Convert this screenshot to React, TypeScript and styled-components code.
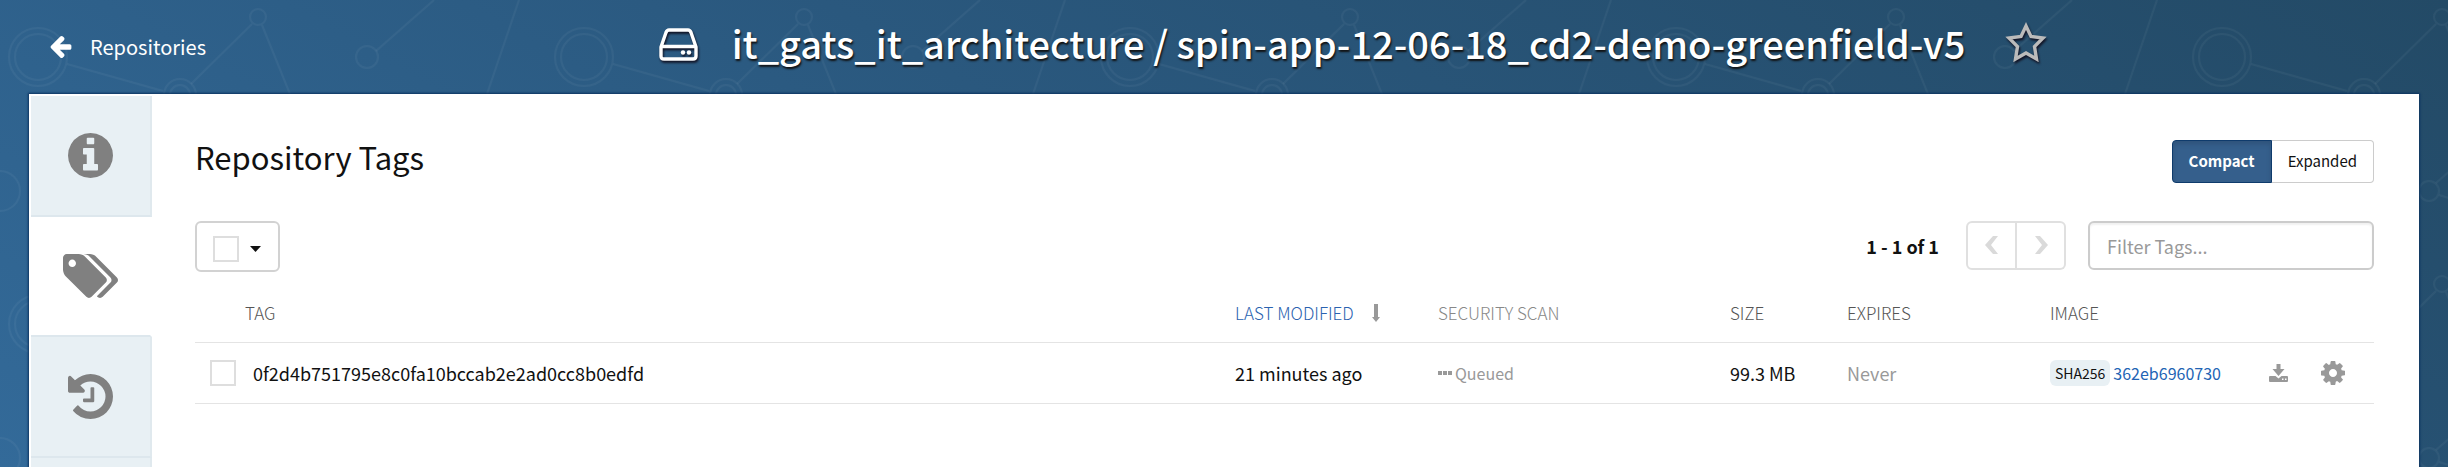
import React, { useId } from "react";
import styled, { createGlobalStyle, css } from "styled-components";

const tile = `<svg xmlns="http://www.w3.org/2000/svg" width="546" height="267" viewBox="0 0 546 267" fill="none" stroke="#fff" stroke-opacity=".045" stroke-width="2"><circle cx="38" cy="57" r="29"/><circle cx="38" cy="57" r="23"/><path d="M67 64 163 91"/><circle cx="180" cy="95" r="16"/><circle cx="180" cy="95" r="10"/><path d="M191 84 252 24"/><circle cx="258" cy="17" r="8"/><path d="M262 25 290 94 318 170"/><circle cx="367" cy="57" r="11"/><path d="M376 51 434 0"/><path d="M519 0 487 94"/><circle cx="0" cy="191" r="20"/><circle cx="546" cy="191" r="20"/><circle cx="245" cy="191" r="10"/><path d="M252 183 290 150M255 195 320 215"/></svg>`;

const GlobalStyle = createGlobalStyle`
  * { box-sizing: border-box; }
  body {
    margin: 0;
    font-family: "Noto Sans CJK SC", "Noto Sans", sans-serif;
    color: #111;
    background-color: #2b5a80;
    background-image: url("data:image/svg+xml,${encodeURIComponent(tile)}"),
      linear-gradient(30deg, #336a99 0%, #2a587e 50%, #234a66 100%);
    background-attachment: fixed;
  }
  button, input { font: inherit; color: inherit; margin: 0; }
`;

const Page = styled.div`
  min-height: 100vh;
  display: flex;
  flex-direction: column;
`;

const Header = styled.header`
  display: flex;
  align-items: center;
  height: 94px;
  padding-left: 50px;
  color: #fff;
`;

const BackLink = styled.a`
  display: flex;
  flex: none;
  align-items: center;
  gap: 18px;
  width: 208px;
  font-size: 20px;
  line-height: 28px;
  color: #fff;
  text-decoration: none;
`;

const RepoTitle = styled.h1`
  flex: 1;
  display: flex;
  align-items: center;
  justify-content: center;
  margin: 0;
  padding-bottom: 6px;
  gap: 34px;
  font-size: 38px;
  line-height: 52px;
  font-weight: 500;
  text-shadow: 1px 2px 2px #111;
  white-space: nowrap;
`;

const RepoName = styled.span`
  padding-bottom: 3px;
`;

const StarButton = styled.button`
  display: flex;
  padding: 0 0 4px;
  margin-left: 6px;
  border: 0;
  background: none;
`;

const Shadowed = styled.svg`
  display: block;
  filter: drop-shadow(1px 2px 1px #112);
`;

const Icon = styled.svg`
  display: block;
  flex: none;
`;

const Panel = styled.main`
  flex: 1;
  display: flex;
  margin: 0 29px;
  background: #fff;
  box-shadow: 0 0 2px 1px #0b3360;
`;

const SideTabs = styled.nav`
  width: 123px;
  flex: none;
  display: flex;
  flex-direction: column;
  padding: 2px 0 0 2px;
`;

const SideTab = styled.a<{ $active?: boolean; $rest?: boolean }>`
  display: flex;
  flex: none;
  align-items: center;
  justify-content: center;
  height: 121px;
  padding-bottom: 1px;
  color: #808080;
  background: #e8f0f4;
  border-right: 2px solid #e0e9ee;
  border-bottom: 2px solid #dde7ed;
  ${(p) =>
    p.$active &&
    css`
      height: 120px;
      background: #fff;
      border-right-color: #fff;
    `}
  ${(p) =>
    p.$rest &&
    css`
      flex: 1;
      height: auto;
      border-bottom: 0;
    `}
`;

const Content = styled.section`
  flex: 1;
  min-width: 0;
  padding: 46px 45px 0 43px;
`;

const Row = styled.div<{ $gap?: number }>`
  display: flex;
  align-items: center;
  gap: ${(p) => p.$gap ?? 0}px;
`;

const TitleRow = styled(Row)`
  justify-content: space-between;
  height: 43px;
`;

const Heading = styled.h2`
  margin: 0;
  padding-bottom: 9px;
  font-size: 31px;
  line-height: 40px;
  font-weight: 400;
`;

const ModeButton = styled.button<{ $active?: boolean }>`
  height: 43px;
  padding: 0 16px 2px;
  font-size: 15px;
  line-height: 24px;
  border: 1px solid #ccc;
  background: #fff;
  ${(p) =>
    p.$active
      ? css`
          color: #fff;
          font-weight: 700;
          background: #355f8c;
          border-color: #0f3b6c;
          border-radius: 4px 0 0 4px;
          box-shadow: inset 0 3px 5px rgba(0, 0, 0, 0.13);
        `
      : css`
          border-left: 0;
          border-radius: 0 4px 4px 0;
        `}
`;

const Toolbar = styled(Row)`
  justify-content: space-between;
  align-items: flex-start;
  margin-top: 38px;
  height: 51px;
`;

const CheckMenu = styled.div`
  display: flex;
  align-items: center;
  gap: 11px;
  width: 85px;
  height: 51px;
  padding: 4px 0 0 16px;
  border: 2px solid #d2d2d2;
  border-radius: 6px;
`;

const CheckBox = styled.input`
  appearance: none;
  flex: none;
  display: block;
  width: 26px;
  height: 26px;
  border: 2px solid #dedede;
  background: #fff;
`;

const CaretButton = styled.button`
  padding: 0;
  border: 0;
  background: none;
`;

const PageInfo = styled.span`
  padding-right: 27px;
  font-size: 18px;
  line-height: 26px;
  font-weight: 700;
`;

const PagerButton = styled.button<{ $side: "left" | "right" }>`
  display: flex;
  align-items: center;
  justify-content: center;
  width: ${(p) => (p.$side === "left" ? 51 : 49)}px;
  height: 49px;
  padding: 0;
  border: 2px solid #e0e0e0;
  background: #fff;
  color: #dadada;
  ${(p) =>
    p.$side === "left"
      ? css`border-radius: 6px 0 0 6px;`
      : css`
          border-left: 0;
          border-radius: 0 6px 6px 0;
        `}
`;

const FilterInput = styled.input`
  width: 286px;
  height: 49px;
  margin-left: 22px;
  padding: 0 17px;
  font-size: 18px;
  border: 2px solid #ccc;
  border-radius: 6px;
  box-shadow: inset 0 2px 2px rgba(0, 0, 0, 0.06);
  &::placeholder { color: #999; opacity: 1; }
`;

const Table = styled.table`
  width: 100%;
  table-layout: fixed;
  border-collapse: collapse;
  margin-top: 11px;
  font-size: 18px;
  line-height: 26px;
`;

const Col = styled.col<{ $w?: number }>`
  width: ${(p) => (p.$w ? `${p.$w}px` : "auto")};
`;

const Th = styled.th<{ $tone?: string }>`
  height: 59px;
  padding: 2px 0 0;
  text-align: left;
  font-size: 17px;
  font-weight: 300;
  color: ${(p) => p.$tone ?? "#555"};
  border-bottom: 1px solid #e4e4e4;
`;

const Td = styled.td<{ $muted?: boolean }>`
  height: 61px;
  padding: 0;
  white-space: nowrap;
  color: ${(p) => (p.$muted ? "#999" : "inherit")};
  border-bottom: 1px solid #e4e4e4;
`;

const TagHead = styled(Th)`
  padding-left: 50px;
`;

const TagCell = styled(Td)`
  padding-left: 15px;
`;

const Queued = styled(Row)`
  font-size: 16px;
`;

const Badge = styled.span`
  height: 26px;
  padding: 0 5px;
  border-radius: 6px;
  background: #e8f0f4;
  font-size: 14px;
  line-height: 26px;
`;

const ImageLink = styled.a`
  font-size: 16px;
  color: #2264b4;
  text-decoration: none;
`;

const IconButton = styled.button`
  display: flex;
  padding: 0;
  border: 0;
  background: none;
  color: #999;
`;

const paths = {
  info: "M1152 1376v-160q0-14-9-23t-23-9h-96V672q0-14-9-23t-23-9H672q-14 0-23 9t-9 23v160q0 14 9 23t23 9h96v320h-96q-14 0-23 9t-9 23v160q0 14 9 23t23 9h448q14 0 23-9t9-23zM1024 480V320q0-14-9-23t-23-9H800q-14 0-23 9t-9 23v160q0 14 9 23t23 9h192q14 0 23-9t9-23zm640 416q0 209-103 385.5T1281.5 1561 896 1664t-385.5-103T231 1281.5 128 896t103-385.5T510.5 231 896 128t385.5 103T1561 510.5 1664 896z",
  tags: "M576 448q0-53-37.5-90.5T448 320t-90.5 37.5T320 448t37.5 90.5T448 576t90.5-37.5T576 448zm1067 576q0 53-37 90l-491 492q-39 37-91 37-53 0-90-37L219 890q-38-37-64.5-101T128 672V256q0-52 38-90t90-38h416q53 0 117 26.5T891 219l715 714q37 39 37 91zm384 0q0 53-37 90l-491 492q-39 37-91 37-36 0-59-14t-53-45l470-470q37-37 37-90 0-52-37-91L1051 219q-38-38-102-64.5T832 128h224q53 0 117 26.5t102 64.5l715 714q37 39 37 91z",
  history: "M1664 896q0 156-61 298t-164 245-245 164-298 61q-172 0-327-72.5T305 1387q-7-10-6.5-22.5T307 1344l137-138q10-9 25-9 16 2 23 12 73 95 179 147t225 52q104 0 198.5-40.5T1258 1258t109.5-163.5T1408 896t-40.5-198.5T1258 534t-163.5-109.5T896 384q-98 0-188 35.5T548 521l137 138q31 30 14 69-17 40-59 40H192q-26 0-45-19t-19-45V256q0-42 40-59 39-17 69 14l130 129q107-101 244.5-156.5T896 128q156 0 298 61t245 164 164 245 61 298zm-640-288v448q0 14-9 23t-23 9H672q-14 0-23-9t-9-23v-64q0-14 9-23t23-9h224V608q0-14 9-23t23-9h64q14 0 23 9t9 23z",
  arrow: "M1664 896v128q0 53-32.5 90.5T1547 1152H843l293 294q38 36 38 90t-38 90l-75 76q-37 37-90 37-52 0-91-37L229 1050q-37-37-37-90 0-52 37-91l651-650q38-38 91-38 52 0 90 38l75 74q38 38 38 91t-38 91L843 768h704q52 0 84.5 37.5T1664 896z",
  cog: "M1152 896q0-106-75-181t-181-75-181 75-75 181 75 181 181 75 181-75 75-181zm512-109v222q0 12-8 23t-20 13l-185 28q-19 54-39 91 35 50 107 138 10 12 10 25t-9 23q-27 37-99 108t-94 71q-12 0-26-9l-138-108q-44 23-91 38-16 136-29 186-7 28-36 28H785q-14 0-24.5-8.5T749 1641l-28-184q-49-16-90-37l-141 107q-10 9-25 9-14 0-25-11-126-114-165-168-7-10-7-23 0-12 8-23 15-21 51-66.5t54-70.5q-27-50-41-99l-183-27q-13-2-21-12.5t-8-23.5V783q0-12 8-23t19-13l186-28q14-46 39-92-40-57-107-138-10-12-10-24 0-10 9-23 26-36 98.5-107.5T465 263q13 0 26 10l138 107q44-23 91-38 16-136 29-186 7-28 36-28h222q14 0 24.5 8.5T1043 151l28 184q49 16 90 37l142-107q9-9 24-9 13 0 25 10 129 119 165 170 7 8 7 22 0 12-8 23-15 21-51 66.5t-54 70.5q26 50 41 98l183 28q13 2 21 12.5t8 23.5z",
};

type GlyphProps = { d: string; box: string; w: number; h: number };
const Glyph = ({ d, box, w, h }: GlyphProps) => (
  <Icon width={w} height={h} viewBox={box} fill="currentColor" aria-hidden="true">
    <path d={d} />
  </Icon>
);

const Chevron = ({ right }: { right?: boolean }) => (
  <Icon width="14" height="20" viewBox="0 0 14 20" fill="currentColor" aria-hidden="true">
    <path d={right ? "M1 0h5l8 9-8 9H1l7-9z" : "M13 0H8L0 9l8 9h5L6 9z"} />
  </Icon>
);

export default function App() {
  const rowId = useId();
  return (
    <Page>
      <GlobalStyle />
      <Header>
        <BackLink href="#repositories">
          <Glyph d={paths.arrow} box="192 181 1472 1558" w={22} h={22} />
          Repositories
        </BackLink>
        <RepoTitle>
          <Shadowed width="39" height="33" viewBox="0 0 39 33" fill="none" stroke="#fff" strokeWidth="3.4" strokeLinejoin="round" aria-hidden="true">
            <path d="M2 19 7 4.500q1-2.500 3-2.500h19q2 0 3 2.500L37 19v9q0 3-3 3H5q-3 0-3-3zM2 18.500h35" />
            <circle cx="24" cy="24.500" r="2.200" fill="#fff" stroke="none" />
            <circle cx="30" cy="24.500" r="2.200" fill="#fff" stroke="none" />
          </Shadowed>
          <RepoName>it_gats_it_architecture / spin-app-12-06-18_cd2-demo-greenfield-v5</RepoName>
          <StarButton aria-label="Star repository">
            <Shadowed width="42" height="40" viewBox="0 0 42 40" fill="none" stroke="#bbb" strokeWidth="3.400">
              <path d="M21 4 26 14.500 38 16 29.500 24.500 31.500 37 21 31 10.500 37 12.500 24.500 4 16 16 14.500z" />
            </Shadowed>
          </StarButton>
        </RepoTitle>
      </Header>
      <Panel>
        <SideTabs aria-label="Repository sections">
          <SideTab href="#info" aria-label="Information">
            <Glyph d={paths.info} box="128 128 1536 1536" w={45} h={45} />
          </SideTab>
          <SideTab href="#tags" aria-label="Tags" $active>
            <Glyph d={paths.tags} box="128 128 1899 1515" w={55} h={44} />
          </SideTab>
          <SideTab href="#history" aria-label="Tag history">
            <Glyph d={paths.history} box="128 128 1536 1536" w={45} h={45} />
          </SideTab>
          <SideTab href="#usage" aria-label="Usage logs" $rest />
        </SideTabs>
        <Content>
          <TitleRow>
            <Heading>Repository Tags</Heading>
            <Row>
              <ModeButton $active>Compact</ModeButton>
              <ModeButton>Expanded</ModeButton>
            </Row>
          </TitleRow>
          <Toolbar>
            <CheckMenu>
              <CheckBox type="checkbox" aria-label="Select all tags" />
              <CaretButton aria-label="Selection options">
                <Icon width="11" height="6" viewBox="0 0 11 6"><path d="M0 0h11L5.500 6z" fill="#111" /></Icon>
              </CaretButton>
            </CheckMenu>
            <Row>
              <PageInfo>1 - 1 of 1</PageInfo>
              <PagerButton $side="left" disabled aria-label="Previous page"><Chevron /></PagerButton>
              <PagerButton $side="right" disabled aria-label="Next page"><Chevron right /></PagerButton>
              <FilterInput type="text" placeholder="Filter Tags..." aria-label="Filter tags" />
            </Row>
          </Toolbar>
          <Table>
            <colgroup>
              <Col />
              <Col $w={203} />
              <Col $w={292} />
              <Col $w={117} />
              <Col $w={203} />
              <Col $w={219} />
              <Col $w={52} />
              <Col $w={53} />
            </colgroup>
            <thead>
              <tr>
                <TagHead>TAG</TagHead>
                <Th $tone="#2a62b0">
                  <Row $gap={18}>
                    LAST MODIFIED
                    <Icon width="8" height="18" viewBox="0 0 8 18" fill="#999"><path d="M2 0h4v13h2l-4 5-4-5h2z" /></Icon>
                  </Row>
                </Th>
                <Th $tone="#888">SECURITY SCAN</Th>
                <Th>SIZE</Th>
                <Th>EXPIRES</Th>
                <Th>IMAGE</Th>
                <Th />
                <Th />
              </tr>
            </thead>
            <tbody>
              <tr>
                <TagCell>
                  <Row $gap={17}>
                    <CheckBox id={rowId} type="checkbox" />
                    <label htmlFor={rowId}>0f2d4b751795e8c0fa10bccab2e2ad0cc8b0edfd</label>
                  </Row>
                </TagCell>
                <Td>21 minutes ago</Td>
                <Td $muted>
                  <Queued $gap={3}>
                    <Icon width="14" height="4" viewBox="0 0 14 4" fill="#999"><path d="M0 0h4v4H0zM5 0h4v4H5zM10 0h4v4h-4z" /></Icon>
                    Queued
                  </Queued>
                </Td>
                <Td>99.3 MB</Td>
                <Td $muted>Never</Td>
                <Td>
                  <Row $gap={3}>
                    <Badge>SHA256</Badge>
                    <ImageLink href="#image">362eb6960730</ImageLink>
                  </Row>
                </Td>
                <Td>
                  <IconButton aria-label="Fetch tag">
                    <Icon width="19" height="18" viewBox="0 0 19 18" fill="currentColor">
                      <path fillRule="evenodd" d="M7.500 0h4v5h4L9.500 12 3.500 5h4zM1 12h5.500l3 2.500 3-2.500H18q1 0 1 1v4q0 1-1 1H1q-1 0-1-1v-4q0-1 1-1zM13 14.500v1.500h1.500v-1.500zM16 14.500v1.500h1.500v-1.500z" />
                    </Icon>
                  </IconButton>
                </Td>
                <Td>
                  <IconButton aria-label="Tag options">
                    <Glyph d={paths.cog} box="128 128 1536 1536" w={24} h={24} />
                  </IconButton>
                </Td>
              </tr>
            </tbody>
          </Table>
        </Content>
      </Panel>
    </Page>
  );
}
